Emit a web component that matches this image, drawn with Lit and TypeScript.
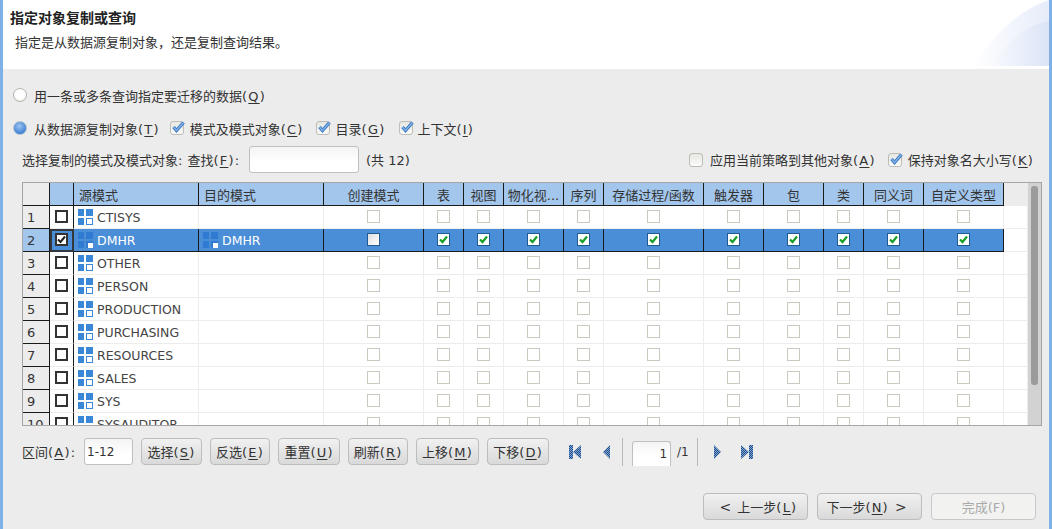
import { LitElement, html, css, svg } from "lit";
import { customElement } from "lit/decorators.js";

const SCHEMAS = ["CTISYS", "DMHR", "OTHER", "PERSON", "PRODUCTION", "PURCHASING", "RESOURCES", "SALES", "SYS", "SYSAUDITOR"];
const HEADS = ["创建模式", "表", "视图", "物化视...", "序列", "存储过程/函数", "触发器", "包", "类", "同义词", "自定义类型"];

const key = (k: string) => html`<span class="key">(<u>${k}</u>)</span>`;

const schemaIcon = (selected: boolean) => html`<svg class="sch" width="16" height="16" viewBox="0 0 16 16">
  <g fill="${selected ? "#2f7bd2" : "#3a87d8"}">
    <rect x="0" y="0" width="6" height="7"/><rect x="8" y="0" width="7" height="7"/><rect x="0" y="9" width="6" height="7"/>
  </g>
  ${selected
    ? svg`<rect x="8" y="9" width="7" height="7" fill="#2f7bd2"/><rect x="10" y="11" width="5" height="5" fill="#fff"/>`
    : svg`<rect x="8.5" y="9.5" width="6" height="6" fill="#fff" stroke="#3a87d8"/>`}
</svg>`;

const tick = html`<svg width="11" height="11" viewBox="0 0 11 11"><path d="M2 5.5 L4.5 8 L9 2.5" fill="none" stroke="#18a028" stroke-width="2.2"/></svg>`;
const darkTick = html`<svg width="9" height="9" viewBox="0 0 9 9"><path d="M1 4.5 L3.5 7 L8 1.5" fill="none" stroke="#222" stroke-width="2"/></svg>`;
const checkMark = html`<svg width="16" height="15" viewBox="0 0 16 15">
  <path d="M3.5 7 L6.5 10.5 L13.5 2.5" fill="none" stroke="#3c78c0" stroke-width="3.4"/>
  <path d="M3.5 7 L6.5 10.5 L13.5 2.5" fill="none" stroke="#86b4ea" stroke-width="1.2"/>
</svg>`;

const nav = (d: string) => html`<svg class="nav" width="14" height="14" viewBox="0 0 14 14"><path d="${d}" fill="url(#dither)"/></svg>`;

@customElement("app-root")
export class AppRoot extends LitElement {
  static styles = css`
    :host {
      display: block; width: 1052px; height: 529px; box-sizing: border-box; overflow: hidden;
      background: #ececec; border-left: 3px solid #7fb0e6; border-right: 3px solid #7fb0e6;
      font: 13px "DejaVu Sans", "Noto Sans CJK SC", sans-serif; color: #333; position: relative;
    }
    u { text-underline-offset: 2px; }
    .key { letter-spacing: 1.2px; }
    .defs { position: absolute; }
    .head { height: 69px; background: #fff; position: relative; box-sizing: border-box; padding: 9px 0 0 7px; }
    .title { font-size: 14px; font-weight: bold; color: #222; line-height: 18px; }
    .sub { margin: 7px 0 0 5px; line-height: 18px; }
    .corner { position: absolute; right: 0; top: 0; }
    .row { display: flex; align-items: center; height: 22px; white-space: nowrap; }
    .r1 { margin-top: 15px; padding-left: 10px; }
    .r2 { margin-top: 11px; padding-left: 10px; }
    .r3 { margin-top: 7px; height: 27px; padding: 0 15px 0 19px; }
    .radio { width: 14px; height: 14px; border-radius: 50%; box-sizing: border-box; border: 1px solid #b4b4ac; margin-right: 7px;
      background: radial-gradient(circle at 50% 40%, #fff 50%, #deded9); flex: none; }
    .radio.on { background: radial-gradient(circle at 45% 35%, #9cc4f2, #3b7fd4 75%); border-color: #b4c0cc; }
    .cb { width: 14px; height: 14px; box-sizing: border-box; border: 1px solid #bdbdb5; border-radius: 3px; background: linear-gradient(#e6e6e2, #fbfbfa);
      margin-right: 5px; flex: none; display: inline-block; position: relative; }
    .cb svg { position: absolute; left: -1px; top: -2px; }
    .cb.wide { margin-right: 6px; }
    .cb.tight { margin-right: 4px; }
    .cb.lone { margin-right: 7px; }
    .cb.snug { margin-right: 6px; }
    .g10 { margin-left: 10px; } .g12 { margin-left: 12px; } .g14 { margin-left: 14px; }
    .colon { margin-right: 5px; }
    .input { box-sizing: border-box; background: linear-gradient(#f4f4f4, #fff 60%); border: 1px solid #c0c0c0; border-radius: 3px; }
    .search { width: 110px; height: 27px; margin: 0 7px 0 10px; }
    .spacer { flex: 1; }
    .grid { box-sizing: border-box; margin: 9px 7px 0 19px; height: 244px; border: 1px solid #a6a6a6; display: flex; background: #ececec; overflow: hidden; }
    .cols { flex: 1; min-width: 0; overflow: hidden; }
    .tr { display: grid; grid-template-columns: 27px 24px 125px 125px 100px 40px 40px 60px 40px 100px 60px 60px 40px 60px 80px 1fr; height: 23px; background: #fff; }
    .tr > div { box-sizing: border-box; border-right: 1px solid #ececec; border-bottom: 1px solid #ececec; display: flex; align-items: center; justify-content: center; overflow: hidden; white-space: nowrap; }
    .tr.hd { background: #ececec; }
    .tr.hd > div { background: #a2c6ec; border-color: #1a1a1a; }
    .tr.hd > div.num { background: #ececec; }
    .tr.hd > div.end { background: #ececec; border: 0; }
    .tr.hd > div.left { justify-content: flex-start; padding-left: 5px; }
    .tr > div.num { background: #ececec; justify-content: flex-start; padding-left: 4px; border-color: #1a1a1a; }
    .tr > div.sel { border-right-color: #1a1a1a; }
    .tr > div.name { justify-content: flex-start; padding-left: 4px; font-size: 12.5px; color: #444; }
    .tr .sch { margin-right: 3px; flex: none; }
    .tr.on > div:not(.end) { background: #4a8ed8; border-color: #1a1a1a; }
    .tr.on > div.name { color: #fff; }
    .tr.on > div.num { background: #a2c6ec; }
    .tr.on > div.sel { outline: 2px solid #33383e; outline-offset: -2px; border-color: transparent; }
    .box { width: 13px; height: 13px; box-sizing: border-box; margin-top: -2px; border: 1px solid #c9c9c0; background: #fff; display: flex; align-items: center; justify-content: center; }
    .box.on { border-color: #1f5a92; }
    .box.blank { border-color: #1f5a92; background: linear-gradient(135deg, #ddd, #fff); }
    .rowbox { width: 13px; height: 13px; box-sizing: border-box; margin-top: -2px; border: 2px solid #333; background: #fff; display: flex; align-items: center; justify-content: center; }
    .scroll { width: 13px; flex: none; background: #d2d2d2; box-sizing: border-box; padding: 3px 3px 0 3px; }
    .thumb { height: 199px; background: #9b9b9b; border-radius: 3px; }
    .tools { display: flex; align-items: center; height: 27px; margin: 12px 0 0 19px; white-space: nowrap; }
    .range { width: 49px; height: 27px; margin: 0 8px 0 9px; padding-left: 2px; display: flex; align-items: center; font-size: 12px; }
    .btn { box-sizing: border-box; height: 27px; border: 1px solid #bdbdbd; border-radius: 4px; background: linear-gradient(#f1f1f1, #d9d9d9); display: flex; align-items: center; justify-content: center; flex: none; }
    .tools .btn { margin-right: 8px; }
    .w61 { width: 61px; } .w60 { width: 60px; } .w62 { width: 62px; } .w63 { width: 63px; }
    .nav { flex: none; }
    .navs { margin-left: 11px; display: flex; align-items: center; height: 27px; }
    .sep { width: 1px; height: 28px; background: #b8b8b8; flex: none; }
    .w18 { width: 18px; } .w8 { width: 8px; } .w14 { width: 14px; } .w17 { width: 17px; }
    .page { box-sizing: border-box; width: 39px; height: 25px; margin: 3px 6px 0 9px; border: 1px solid #c0c0c0; border-bottom: 0; border-radius: 3px 3px 0 0; background: linear-gradient(#f4f4f4, #fff 60%); display: flex; align-items: center; justify-content: flex-end; padding-right: 3px; font-size: 12px; }
    .tot { font-size: 12px; margin-right: 8px; }
    .foot { display: flex; justify-content: flex-end; gap: 9px; margin: 28px 13px 0 0; }
    .foot .btn { width: 105px; }
    .btn.dis { color: #aaa; background: #f2f2f1; border-color: #c8c8c8; }
    .ang { margin: 0 6px; font-size: 14px; }
  `;

  render() {
    return html`
      <svg class="defs" width="0" height="0"><defs>
        <pattern id="dither" width="2" height="2" patternUnits="userSpaceOnUse">
          <rect width="2" height="2" fill="#7da4d4"/><rect width="1" height="1" fill="#234f88"/><rect x="1" y="1" width="1" height="1" fill="#234f88"/>
        </pattern></defs></svg>
      <div class="head">
        <svg class="corner" width="76" height="66" viewBox="0 0 76 66">
          <defs><linearGradient id="cg" x1="0" x2="1" y1="0" y2="0"><stop offset="0" stop-color="#fff"/><stop offset="1" stop-color="#e6ecf9"/></linearGradient>
          <linearGradient id="cg2" x1="0" x2="1" y1="0" y2="0"><stop offset="0" stop-color="#f7f9fd"/><stop offset="1" stop-color="#dbe4f6"/></linearGradient></defs>
          <path d="M0 66 C18 40 40 12 76 0 V66 Z" fill="url(#cg)"/>
          <path d="M20 66 C30 45 50 26 76 21 V66 Z" fill="url(#cg2)"/>
        </svg>
        <div class="title">指定对象复制或查询</div>
        <div class="sub">指定是从数据源复制对象，还是复制查询结果。</div>
      </div>
      <div class="row r1"><span class="radio"></span><span>用一条或多条查询指定要迁移的数据${key("Q")}</span></div>
      <div class="row r2">
        <span class="radio on"></span><span>从数据源复制对象${key("T")}</span>
        <span class="cb wide g10">${checkMark}</span><span>模式及模式对象${key("C")}</span>
        <span class="cb wide g12">${checkMark}</span><span>目录${key("G")}</span>
        <span class="cb tight g14">${checkMark}</span><span>上下文${key("I")}</span>
      </div>
      <div class="row r3">
        <span>选择复制的模式及模式对象:</span><span class="colon"></span><span>查找${key("F")}:</span>
        <span class="input search"></span><span>(共 12)</span>
        <span class="spacer"></span>
        <span class="cb lone"></span><span>应用当前策略到其他对象${key("A")}</span>
        <span class="cb snug g12">${checkMark}</span><span>保持对象名大小写${key("K")}</span>
      </div>
      <div class="grid">
        <div class="cols">
          <div class="tr hd">
            <div class="num"></div><div></div><div class="left">源模式</div><div class="left">目的模式</div>
            ${HEADS.map((h) => html`<div>${h}</div>`)}
            <div class="end"></div>
          </div>
          ${SCHEMAS.map((s, i) => {
            const on = i === 1;
            return html`<div class="tr ${on ? "on" : ""}">
              <div class="num">${i + 1}</div>
              <div class="sel"><span class="rowbox">${on ? darkTick : ""}</span></div>
              <div class="name">${schemaIcon(on)}${s}</div>
              <div class="name">${on ? html`${schemaIcon(true)}${s}` : ""}</div>
              ${HEADS.map((_, c) => html`<div><span class="box ${on ? (c === 0 ? "blank" : "on") : ""}">${on && c > 0 ? tick : ""}</span></div>`)}
              <div class="end"></div>
            </div>`;
          })}
        </div>
        <div class="scroll"><div class="thumb"></div></div>
      </div>
      <div class="tools">
        <span>区间${key("A")}:</span><span class="input range">1-12</span>
        <span class="btn w61"><span>选择${key("S")}</span></span>
        <span class="btn w60"><span>反选${key("E")}</span></span>
        <span class="btn w62"><span>重置${key("U")}</span></span>
        <span class="btn w60"><span>刷新${key("R")}</span></span>
        <span class="btn w63"><span>上移${key("M")}</span></span>
        <span class="btn w62"><span>下移${key("D")}</span></span>
        <span class="navs">
          ${nav("M1 0H5V14H1ZM13 0V14L5 7Z")}
          <span class="w18"></span>
          ${nav("M10 0V14L3 7Z")}
          <span class="w8"></span>
          <span class="sep"></span>
          <span class="page">1</span>
          <span class="tot">/1</span>
          <span class="sep"></span>
          <span class="w14"></span>
          ${nav("M2 0V14L9 7Z")}
          <span class="w14"></span>
          ${nav("M1 0V14L9 7ZM9 0H13V14H9Z")}
        </span>
      </div>
      <div class="foot">
        <span class="btn"><span class="ang">&lt;</span><span>上一步${key("L")}</span></span>
        <span class="btn"><span>下一步${key("N")}</span><span class="ang">&gt;</span></span>
        <span class="btn dis">完成(F)</span>
      </div>
    `;
  }
}
